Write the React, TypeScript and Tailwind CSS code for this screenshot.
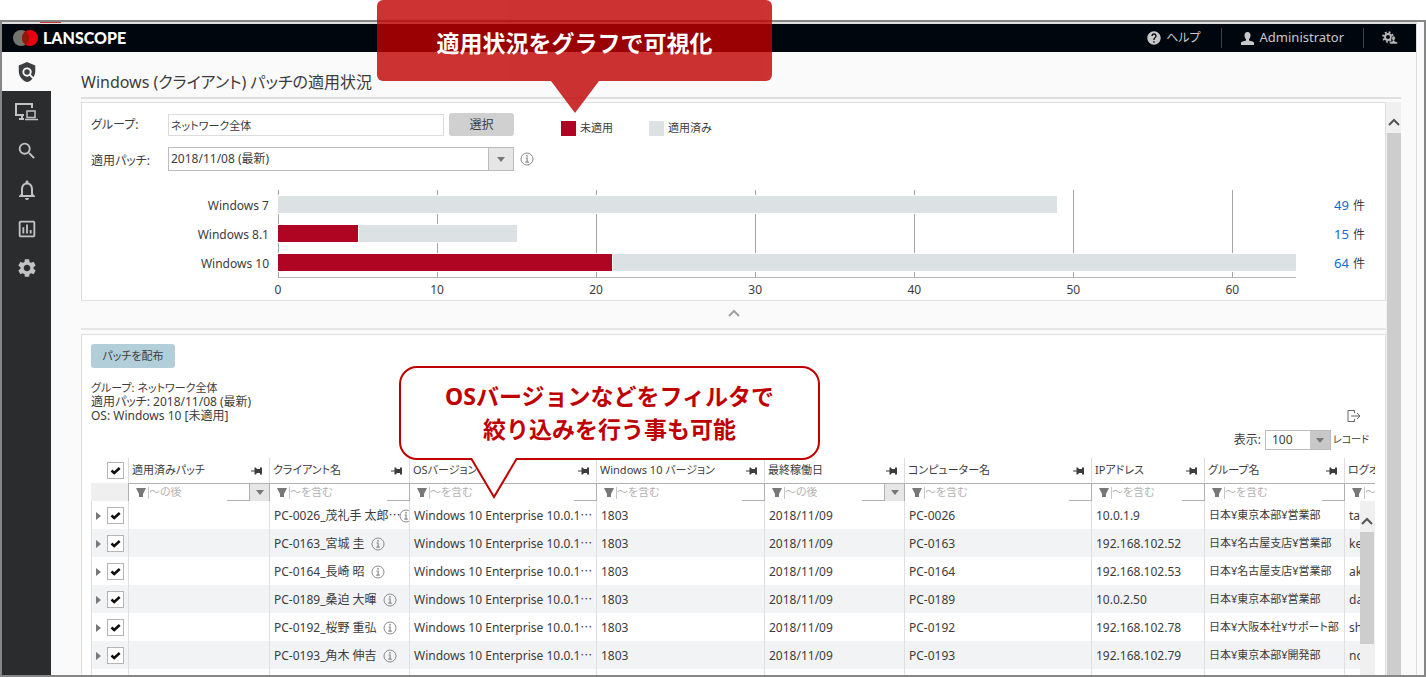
import {
  MdHelp,
  MdNotificationsNone,
  MdOutlineAssessment,
  MdPolicy,
  MdSearch,
  MdSettings,
} from "react-icons/md"

interface OsStat {
  name: string
  missing: number
  total: number
}

interface Column {
  title: string
  width: string
  filter: "after" | "contains"
}

interface Client {
  name: string
  host: string
  ip: string
  group: string
  user: string
}

const CHART_MAX = 64
const TICKS = [0, 10, 20, 30, 40, 50, 60]

const osStats: OsStat[] = [
  { name: "Windows 7", missing: 0, total: 49 },
  { name: "Windows 8.1", missing: 5, total: 15 },
  { name: "Windows 10", missing: 21, total: 64 },
]

const columns: Column[] = [
  { title: "適用済みパッチ", width: "w-[141px]", filter: "after" },
  { title: "クライアント名", width: "w-[140px]", filter: "contains" },
  { title: "OSバージョン", width: "w-[187px]", filter: "contains" },
  { title: "Windows 10 バージョン", width: "w-[168px]", filter: "contains" },
  { title: "最終稼働日", width: "w-[140px]", filter: "after" },
  { title: "コンピューター名", width: "w-[187px]", filter: "contains" },
  { title: "IPアドレス", width: "w-[113px]", filter: "contains" },
  { title: "グループ名", width: "w-[140px]", filter: "contains" },
  { title: "ログオンユーザー", width: "", filter: "contains" },
]

const clients: Client[] = [
  { name: "PC-0026_茂礼手 太郎⋯", host: "PC-0026", ip: "10.0.1.9", group: "日本¥東京本部¥営業部", user: "tarou" },
  { name: "PC-0163_宮城 圭", host: "PC-0163", ip: "192.168.102.52", group: "日本¥名古屋支店¥営業部", user: "kei" },
  { name: "PC-0164_長崎 昭", host: "PC-0164", ip: "192.168.102.53", group: "日本¥名古屋支店¥営業部", user: "akira" },
  { name: "PC-0189_桑迫 大暉", host: "PC-0189", ip: "10.0.2.50", group: "日本¥東京本部¥営業部", user: "daiki" },
  { name: "PC-0192_桜野 重弘", host: "PC-0192", ip: "192.168.102.78", group: "日本¥大阪本社¥サポート部", user: "shige" },
  { name: "PC-0193_角木 伸吉", host: "PC-0193", ip: "192.168.102.79", group: "日本¥東京本部¥開発部", user: "nobu" },
]

const percent = (value: number, max: number) => `${(value / max) * 100}%`

const InfoIcon = () => (
  <svg viewBox="0 0 14 14" className="size-3.5 shrink-0" fill="none" stroke="#8a8a8a">
    <circle cx="7" cy="7" r="6" />
    <path d="M5.5 6h1.6v4M5.3 10.2h3.5" strokeWidth="1.2" />
    <circle cx="7" cy="3.8" r=".9" fill="#8a8a8a" stroke="none" />
  </svg>
)

const PinIcon = () => (
  <svg viewBox="0 0 12 10" className="h-2.5 w-3 shrink-0" fill="#3c3c3c">
    <path d="M0 4.500h3.500V1.500h1.300L6 3h3V1.500h2v7H9V7H6L4.800 8.500H3.500v-3H0z" />
  </svg>
)

const FilterIcon = () => (
  <svg viewBox="0 0 10 9" className="h-[9px] w-2.5 shrink-0" fill="#777">
    <path d="M0 0h10L7 6v3H3V6z" />
  </svg>
)

const DownArrow = () => (
  <svg viewBox="0 0 8 5" className="h-[5px] w-2 shrink-0" fill="#777">
    <path d="M0 0h8L4 5z" />
  </svg>
)

const ChevronUp = ({ className }: { className: string }) => (
  <svg viewBox="0 0 12 8" className={`h-2 w-3 ${className}`} fill="none" stroke="currentColor">
    <path d="M1 7l5-5 5 5" />
  </svg>
)

const DevicesIcon = () => (
  <svg viewBox="0 0 24 20" className="h-5 w-6" fill="none" stroke="#c2c2c2" strokeWidth="2">
    <path d="M9 14H1V3h16v4" />
    <path d="M4 18h5M7 14v4" />
    <path d="M12 10h8v6.500h-8z" strokeWidth="1.500" />
    <path d="M10 18.500h13" strokeWidth="1.500" />
  </svg>
)

const UserIcon = ({ className }: { className: string }) => (
  <svg viewBox="0 0 13 13" className={className} fill="#c8c8c8">
    <path d="M6.500 0c2 0 3 1.500 3 3.300 0 1.700-.7 3-1.500 3.900v1.400l4.200 1.200c.6.200.8.600.8 1.200V13H0v-2c0-.6.2-1 .8-1.200L5 8.600V7.200C4.200 6.300 3.500 5 3.500 3.300 3.500 1.500 4.500 0 6.500 0z" />
  </svg>
)

const AdminIcon = () => (
  <svg viewBox="0 0 16 14" className="h-3.5 w-4" fill="none" stroke="#b8b8b8">
    <circle cx="6" cy="6" r="3" strokeWidth="2" />
    <circle cx="6" cy="6" r="4.800" strokeWidth="2" strokeDasharray="1.900 1.870" />
    <path
      d="M11.500 5c1.200 0 1.800.9 1.800 2 0 1-.4 1.700-.9 2.200v.8l2.600.9c.5.200.6.400.6.800V13H7.500v-1.300c0-.4.200-.6.600-.8l2.500-.9v-.8c-.5-.5-.9-1.200-.9-2.200 0-1.100.6-2 1.800-2z"
      fill="#b8b8b8"
      stroke="#00060e"
      strokeWidth=".6"
    />
  </svg>
)

const Checkbox = ({ label }: { label: string }) => (
  <span className="relative block size-[17px]">
    <input
      type="checkbox"
      defaultChecked
      aria-label={label}
      className="block size-full appearance-none border border-[#b4b4b4] bg-white"
    />
    <svg
      viewBox="0 0 17 17"
      className="pointer-events-none absolute inset-0"
      fill="none"
      stroke="#111"
      strokeWidth="2.600"
    >
      <path d="M4.500 8.500l2.700 2.500 5.500-5" />
    </svg>
  </span>
)

const Header = () => (
  <header className="flex h-7 items-center justify-between bg-[#00060e] text-[13px] text-[#c8c8c8]">
    <div className="flex items-center gap-1 pl-[10px]">
      <svg viewBox="0 0 27 18" className="h-[18px] w-[27px]">
        <circle cx="9" cy="9" r="8" fill="#73756f" />
        <circle cx="18" cy="9" r="8" fill="#e60012" />
        <path d="M13.500 2.400a8 8 0 010 13.200 8 8 0 010-13.200z" fill="#8c1a08" />
      </svg>
      <span className="font-[Lato] text-base font-black text-white">LANSCOPE</span>
    </div>

    <div className="flex items-center">
      <a href="#help" className="flex items-center gap-1 pr-5">
        <MdHelp className="size-4" />
        <span className="text-xs">ヘルプ</span>
      </a>
      <a href="#account" className="flex h-5 items-center gap-[6px] border-l border-[#3d4248] px-[19px]">
        <UserIcon className="size-[13px]" />
        Administrator
      </a>
      <button aria-label="管理" className="flex h-5 items-center border-l border-[#3d4248] px-[18px]">
        <AdminIcon />
      </button>
    </div>
  </header>
)

const Sidebar = () => (
  <nav className="flex w-[49px] shrink-0 flex-col bg-[#2a2c2e] text-[#c2c2c2]">
    <a href="#patch" aria-label="パッチ" className="flex h-[39px] items-center justify-center bg-[#fafafa] text-[#3c3e40]">
      <MdPolicy className="size-[22px]" />
    </a>
    <a href="#devices" aria-label="デバイス" className="flex h-10 items-center justify-center">
      <DevicesIcon />
    </a>
    <a href="#search" aria-label="検索" className="flex h-[39px] items-center justify-center">
      <MdSearch className="size-[22px]" />
    </a>
    <a href="#alerts" aria-label="アラート" className="flex h-[39px] items-center justify-center">
      <MdNotificationsNone className="size-6" />
    </a>
    <a href="#reports" aria-label="レポート" className="flex h-[39px] items-center justify-center">
      <MdOutlineAssessment className="size-[22px]" />
    </a>
    <a href="#settings" aria-label="設定" className="flex h-10 items-center justify-center">
      <MdSettings className="size-[22px]" />
    </a>
  </nav>
)

const Conditions = () => (
  <div className="flex pt-[10px]">
    <div className="flex flex-col gap-[11px]">
      <div className="flex h-[23px] items-center">
        <label htmlFor="group" className="w-[77px]">
          グループ:
        </label>
        <input
          id="group"
          defaultValue="ネットワーク全体"
          className="mr-[5px] h-[22px] w-[276px] border border-[#dcdcdc] bg-white px-[2px] text-[11px]"
        />
        <button className="h-[23px] w-[65px] rounded-[3px] bg-[#d0d0d0]">選択</button>
      </div>

      <div className="flex h-6 items-center">
        <label htmlFor="patch" className="w-[77px] pt-1">
          適用パッチ:
        </label>
        <div className="mr-[6px] flex h-6 w-[346px] border border-[#bcbcbc] bg-white">
          <select id="patch" className="min-w-0 flex-1 appearance-none px-[2px]">
            <option>2018/11/08 (最新)</option>
          </select>
          <span className="pointer-events-none flex w-[25px] items-center justify-center border-l border-[#bcbcbc] bg-[#e6e6e6]">
            <DownArrow />
          </span>
        </div>
        <InfoIcon />
      </div>
    </div>

    <ul className="ml-[27px] flex gap-9 pt-2 text-[11px]">
      <li className="flex h-[15px] items-center gap-1">
        <span className="size-[15px] bg-[#af0522]" />
        未適用
      </li>
      <li className="flex h-[15px] items-center gap-1">
        <span className="size-[15px] bg-[#dce2e4]" />
        適用済み
      </li>
    </ul>
  </div>
)

const PatchChart = () => (
  <div className="mt-[19px] flex">
    <div className="w-[187px] shrink-0 pr-[9px] text-right">
      {osStats.map((os) => (
        <p key={os.name} className="h-[29px] leading-[31px]">
          {os.name}
        </p>
      ))}
    </div>

    <div className="flex-1">
      <div className="relative border-b border-[#b4b4b4]">
        {TICKS.map((tick) => (
          <span
            key={tick}
            className="absolute inset-y-0 w-px bg-[#a4a4a4]"
            style={{ left: percent(tick, CHART_MAX) }}
          />
        ))}
        {osStats.map((os) => (
          <div key={os.name} className="relative flex h-[29px] items-center">
            <div
              className="flex h-[19px] gap-px border-y border-white bg-white"
              style={{ width: percent(os.total, CHART_MAX) }}
            >
              {os.missing > 0 && (
                <span className="bg-[#af0522]" style={{ width: percent(os.missing, os.total) }} />
              )}
              <span className="flex-1 bg-[#dce2e4]" />
            </div>
          </div>
        ))}
      </div>
      <div className="relative h-[22px]">
        {TICKS.map((tick) => (
          <span
            key={tick}
            className="absolute -translate-x-1/2 leading-[24px]"
            style={{ left: percent(tick, CHART_MAX) }}
          >
            {tick}
          </span>
        ))}
      </div>
    </div>

    <div className="w-[89px] shrink-0 pr-5 text-right">
      {osStats.map((os) => (
        <p key={os.name} className="h-[29px] leading-[31px]">
          <a href="#clients" className="mr-1 text-[13px] text-[#0d6bd0]">
            {os.total}
          </a>
          件
        </p>
      ))}
    </div>
  </div>
)

const FilterCell = ({ column }: { column: Column }) => (
  <td className="h-[18px] border-t border-l border-[#b0b0b0] p-0">
    <div className="relative flex h-[17px] items-center pl-[7px]">
      <FilterIcon />
      <input
        aria-label={column.title}
        placeholder={column.filter === "after" ? "～の後" : "～を含む"}
        className="ml-[2px] h-3 w-full min-w-0 border-l border-[#c8c8c8] text-[11px] text-[#555] placeholder:text-[#b4b4b4]"
      />
      {column.width && <span className="h-full w-[22px] shrink-0 border-b border-[#b0b0b0]" />}
      {column.filter === "after" && (
        <button
          aria-label="日付を選択"
          className="flex h-full w-5 shrink-0 items-center justify-center border-l border-[#b0b0b0] bg-[#e6e6e6]"
        >
          <DownArrow />
        </button>
      )}
    </div>
  </td>
)

const ClientTable = () => (
  <div className="relative mr-[10px] overflow-hidden">
    <table className="w-full table-fixed border-separate border-spacing-0 text-left">
      <thead>
        <tr className="h-[25px]">
          <th className="w-[37px] p-0 pl-4">
            <Checkbox label="すべて選択" />
          </th>
          {columns.map((column) => (
            <th key={column.title} className={`${column.width} overflow-hidden border-l border-[#dcdcdc] p-0 font-normal`}>
              <div className="flex items-center justify-between pr-[6px] pl-[3px] text-[11px] whitespace-nowrap">
                {column.title}
                <PinIcon />
              </div>
            </th>
          ))}
        </tr>
        <tr>
          <td className="bg-[#efefef] p-0" />
          {columns.map((column) => (
            <FilterCell key={column.title} column={column} />
          ))}
        </tr>
      </thead>
      <tbody>
        {clients.map((client) => (
          <tr
            key={client.host}
            className="h-7 whitespace-nowrap even:bg-[#f2f3f5] [&>td]:overflow-hidden [&>td]:border-l [&>td]:border-[#dfdfdf] [&>td]:p-0 [&>td]:pt-px [&>td]:pl-1"
          >
            <td>
              <div className="flex items-center gap-[6px]">
                <svg viewBox="0 0 5 8" className="h-2 w-[5px]" fill="#777">
                  <path d="M0 0l5 4-5 4z" />
                </svg>
                <Checkbox label={client.host} />
              </div>
            </td>
            <td />
            <td>
              <div className="flex items-center">
                <span className="mr-[6px] shrink-0 last:mr-0">{client.name}</span>
                <span className={client.name.endsWith("⋯") ? "-ml-2" : ""}>
                  <InfoIcon />
                </span>
              </div>
            </td>
            <td>Windows 10 Enterprise 10.0.1⋯</td>
            <td>1803</td>
            <td>2018/11/09</td>
            <td>{client.host}</td>
            <td>{client.ip}</td>
            <td className="text-[11px]">{client.group}</td>
            <td>{client.user}</td>
          </tr>
        ))}
        <tr className="h-7">
          <td className="border-l border-[#dfdfdf]" />
          {columns.map((column) => (
            <td key={column.title} className="border-l border-[#dfdfdf]" />
          ))}
        </tr>
      </tbody>
    </table>

    <div className="absolute top-[43px] right-0 bottom-0 w-[15px] bg-[#f0f0f0]">
      <ChevronUp className="mt-4 ml-px text-[#555] [stroke-width:2]" />
      <div className="mt-[7px] h-28 w-[14px] bg-[#cdcdcd]" />
    </div>
  </div>
)

const ClientPanel = () => (
  <section className="border border-[#dfdfdf] bg-white pt-[9px] pl-[9px]">
    <button className="h-6 w-[84px] rounded-[3px] bg-[#b1ced9] text-[11px]">パッチを配布</button>

    <div className="mt-[13px] mb-2 flex justify-between pr-4">
      <div className="leading-[14px]">
        <p className="text-[11px]">グループ: ネットワーク全体</p>
        <p>適用パッチ: 2018/11/08 (最新)</p>
        <p>OS: Windows 10 [未適用]</p>
      </div>

      <div className="flex flex-col items-end gap-2 pt-[29px]">
        <button aria-label="エクスポート" className="mr-2">
          <svg viewBox="0 0 14 12" className="h-3 w-3.5" fill="none" stroke="#666">
            <path d="M7.500 3V.5H1v11h6.500V9M4 6h9M10 3l3 3-3 3" />
          </svg>
        </button>
        <div className="flex h-5 items-center">
          <label htmlFor="page-size" className="mr-1">
            表示:
          </label>
          <div className="mr-0.5 flex h-5 w-[66px] border border-[#bcbcbc]">
            <select id="page-size" className="min-w-0 flex-1 appearance-none pl-[6px]">
              <option>100</option>
            </select>
            <span className="pointer-events-none flex w-5 items-center justify-center bg-[#c8c8c8]">
              <DownArrow />
            </span>
          </div>
          <span className="text-[10px]">レコード</span>
        </div>
      </div>
    </div>

    <ClientTable />
  </section>
)

const GraphCallout = () => (
  <div className="absolute top-0 left-[377px] w-[395px] opacity-80">
    <div className="h-[81px] rounded-md bg-[#c00000]" />
    <svg viewBox="0 0 48 32" className="ml-[174px] h-8 w-12" fill="#c00000">
      <path d="M0 0h48L24 32z" />
    </svg>
  </div>
)

const FilterCallout = () => (
  <div className="absolute top-[366px] left-[399px] w-[421px] text-center">
    <div className="rounded-[18px] border-2 border-[#c00000] bg-white py-3 text-[23px] leading-[33px] font-bold text-[#c00000] [font-feature-settings:normal]">
      <p>OSバージョンなどをフィルタで</p>
      <p>絞り込みを行う事も可能</p>
    </div>
    <svg viewBox="0 0 48 42" className="relative -mt-0.5 ml-[71px] h-[42px] w-12" fill="#fff">
      <path d="M0 0h48v2L24 40 0 2z" />
      <path d="M0 1h1.500L24 39 46.500 1H48" fill="none" stroke="#c00000" strokeWidth="2" />
    </svg>
  </div>
)

const App = () => {
  return (
    <div
      lang="ja"
      className="relative flex h-screen flex-col overflow-hidden bg-white pt-5 font-['Noto_Sans','Noto_Sans_CJK_JP',sans-serif] text-xs text-[#3c3c3c] [font-feature-settings:'palt']"
    >
      <div className="flex min-h-0 flex-1 overflow-hidden border-2 border-[#868686] bg-[#fafafa]">
        <div className="flex min-w-0 flex-1 flex-col border-r border-[#dcdcdc]">
          <div className="h-0.5 shrink-0 bg-[#dedede] pl-[38px]">
            <div className="h-px w-[21px] bg-[#d03030]" />
          </div>
          <Header />

          <div className="flex min-h-0 flex-1">
            <Sidebar />
            <main className="flex min-w-0 flex-1 flex-col pr-[15px] pl-[30px]">
              <h1 className="mb-[3px] h-[47px] shrink-0 border-b-2 border-[#dfdfdf] pt-[18px] text-base leading-6">
                Windows (クライアント) パッチの適用状況
              </h1>

              <div className="flex min-h-0 flex-1">
                <div className="min-w-0 flex-1 overflow-hidden">
                  <section className="border border-[#dfdfdf] bg-white pl-[9px]">
                    <Conditions />
                    <PatchChart />
                  </section>
                  <button
                    aria-label="折りたたむ"
                    className="mb-1 flex h-[29px] w-full items-center justify-center border-b-2 border-[#e6e6e6] pb-1"
                  >
                    <ChevronUp className="text-[#a0a0a0] [stroke-width:2]" />
                  </button>
                  <ClientPanel />
                </div>

                <div className="flex w-[15px] shrink-0 flex-col items-center bg-[#f0f0f0]">
                  <ChevronUp className="mt-4 mb-[7px] shrink-0 text-[#555] [stroke-width:2]" />
                  <div className="w-[14px] flex-1 bg-[#cdcdcd]" />
                </div>
              </div>
            </main>
          </div>
        </div>
        <div className="w-[7px] shrink-0" />
      </div>

      <GraphCallout />
      <p className="absolute top-[26px] left-[377px] w-[395px] text-center text-[23px] leading-[34px] font-bold text-white [font-feature-settings:normal]">
        適用状況をグラフで可視化
      </p>
      <FilterCallout />
    </div>
  )
}

export default App
